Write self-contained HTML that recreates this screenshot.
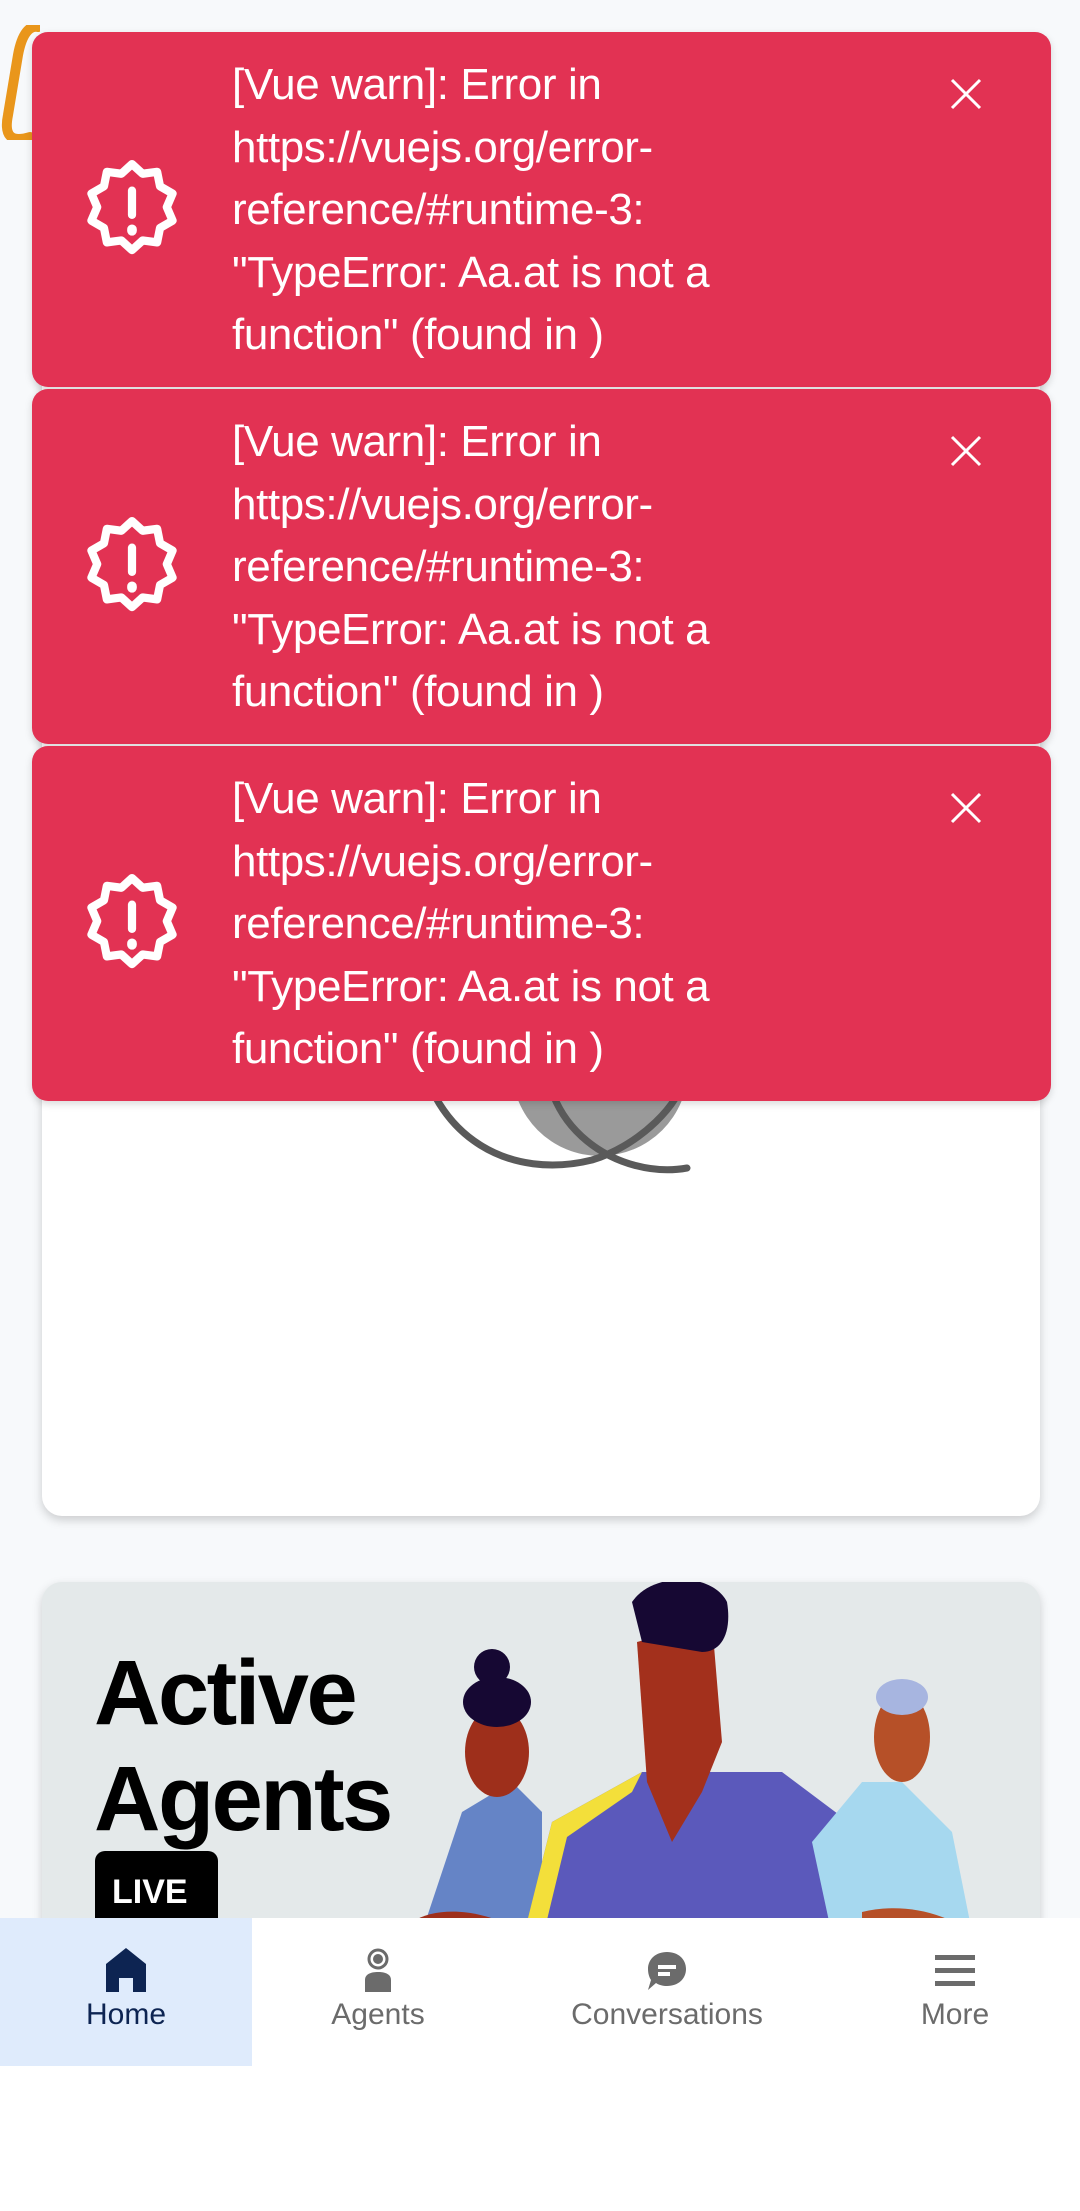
<!DOCTYPE html>
<html><head><meta charset="utf-8"><style>
*{box-sizing:border-box;margin:0;padding:0}
body{width:1080px;height:2211px;background:#f7f9fb;position:relative;overflow:hidden;font-family:"Liberation Sans",sans-serif}
.card{position:absolute;left:42px;width:998px;background:#fff;border-radius:20px;box-shadow:0 4px 10px rgba(0,0,0,.18)}
.toast{position:absolute;left:32px;width:1019px;height:355px;background:#e23253;border-radius:16px;color:#fff;box-shadow:0 3px 8px rgba(0,0,0,.15)}
.toast .t{position:absolute;left:200px;top:22px;font-size:44px;line-height:62.5px;letter-spacing:-0.4px;white-space:nowrap}
.toast .ic{position:absolute;left:72px;top:150px}
.toast .x{position:absolute;left:917px;top:45px}
.nav{position:absolute;top:1918px;left:0;width:1080px;height:148px;background:#fff}
.tab{position:absolute;top:0;height:148px;text-align:center;font-size:30px;color:#6b6b6b}
.tab span{position:absolute;left:0;right:0;top:80px}
</style></head><body>
<div style="position:absolute;left:0;top:25px;width:40px;height:115px;">
<svg width="40" height="115"><path d="M38 2 C30 0 22 8 18 30 L8 90 C4 110 10 118 30 112" fill="none" stroke="#e9961b" stroke-width="10" stroke-linecap="round"/></svg></div>
<div class="card" style="top:300px;height:1216px">
<svg style="position:absolute;left:300px;top:400px" width="420" height="480">
<circle cx="258" cy="368" r="88" fill="#9a9a9a"/>
<path d="M280 300 l20 10 l-5 40 l-25 20z" fill="#cfcfcf"/>
<path d="M75 340 C90 440 170 480 250 460 C300 445 340 400 340 380" fill="none" stroke="#5a5a5a" stroke-width="7" stroke-linecap="round"/>
<path d="M205 330 C190 430 280 480 345 468" fill="none" stroke="#5a5a5a" stroke-width="7" stroke-linecap="round"/>
</svg>
</div>
<div class="card" style="top:1582px;height:400px;background:#e4e9ea;overflow:hidden">
<div style="position:absolute;left:52px;top:58px;font-size:92px;font-weight:bold;line-height:106px;color:#000;letter-spacing:-2.5px">Active<br>Agents</div>
<div style="position:absolute;left:53px;top:269px;width:123px;height:80px;background:#000;border-radius:10px;color:#fff;font-weight:bold;font-size:34px;padding:22px 0 0 17px">LIVE</div>
<svg style="position:absolute;left:340px;top:0" width="660" height="400">
<path d="M40 350 L80 230 L130 200 L160 230 L160 400 L30 400z" fill="#6584c6"/>
<ellipse cx="115" cy="170" rx="32" ry="45" fill="#9e2f1b"/>
<ellipse cx="115" cy="120" rx="34" ry="25" fill="#160833"/>
<circle cx="110" cy="85" r="18" fill="#160833"/>
<path d="M130 400 L170 240 L260 190 L400 190 L480 250 L520 400z" fill="#5b59bb"/>
<path d="M170 240 L260 190 L250 210 L185 255 L150 400 L130 400z" fill="#f3df3a"/>
<path d="M255 60 L330 40 L340 160 L320 210 L290 260 L265 200z" fill="#a3301c"/>
<path d="M250 20 C270 -10 330 -10 345 20 C350 50 340 70 320 70 L260 60z" fill="#160833"/>
<path d="M430 260 L480 200 L520 200 L570 250 L600 400 L460 400z" fill="#a6d8ef"/>
<ellipse cx="520" cy="155" rx="28" ry="45" fill="#b65028"/>
<ellipse cx="520" cy="115" rx="26" ry="18" fill="#a7b5e0"/>
<path d="M30 340 C60 320 120 330 150 360 L150 400 L30 400z" fill="#9e2f1b"/>
<path d="M480 330 C520 320 570 330 600 360 L600 400 L480 400z" fill="#b65028"/>
</svg>
</div>
<div class="toast" style="top:32px"><div class="ic"><svg width="116" height="116" viewBox="0 0 24 24" fill="none" stroke="#fff" stroke-width="1.7" stroke-linecap="round" style="margin:-30px 0 0 -30px"><path d="M12 2.5l2.2 2 3-.4.6 3 2.6 1.5-1.2 2.8 1.2 2.8-2.6 1.5-.6 3-3-.4-2.2 2-2.2-2-3 .4-.6-3-2.6-1.5 1.2-2.8-1.2-2.8 2.6-1.5.6-3 3 .4z" stroke-linejoin="round"/><path d="M12 8v5"/><path d="M12 16v.3" stroke-width="2"/></svg></div><div class="t">[Vue warn]: Error in<br>https://vuejs.org/error-<br>reference/#runtime-3:<br>"TypeError: Aa.at is not a<br>function" (found in )</div><div class="x"><svg width="34" height="34"><path d="M3 3L31 31M31 3L3 31" stroke="#fff" stroke-width="3"/></svg></div></div>
<div class="toast" style="top:389px"><div class="ic"><svg width="116" height="116" viewBox="0 0 24 24" fill="none" stroke="#fff" stroke-width="1.7" stroke-linecap="round" style="margin:-30px 0 0 -30px"><path d="M12 2.5l2.2 2 3-.4.6 3 2.6 1.5-1.2 2.8 1.2 2.8-2.6 1.5-.6 3-3-.4-2.2 2-2.2-2-3 .4-.6-3-2.6-1.5 1.2-2.8-1.2-2.8 2.6-1.5.6-3 3 .4z" stroke-linejoin="round"/><path d="M12 8v5"/><path d="M12 16v.3" stroke-width="2"/></svg></div><div class="t">[Vue warn]: Error in<br>https://vuejs.org/error-<br>reference/#runtime-3:<br>"TypeError: Aa.at is not a<br>function" (found in )</div><div class="x"><svg width="34" height="34"><path d="M3 3L31 31M31 3L3 31" stroke="#fff" stroke-width="3"/></svg></div></div>
<div class="toast" style="top:746px"><div class="ic"><svg width="116" height="116" viewBox="0 0 24 24" fill="none" stroke="#fff" stroke-width="1.7" stroke-linecap="round" style="margin:-30px 0 0 -30px"><path d="M12 2.5l2.2 2 3-.4.6 3 2.6 1.5-1.2 2.8 1.2 2.8-2.6 1.5-.6 3-3-.4-2.2 2-2.2-2-3 .4-.6-3-2.6-1.5 1.2-2.8-1.2-2.8 2.6-1.5.6-3 3 .4z" stroke-linejoin="round"/><path d="M12 8v5"/><path d="M12 16v.3" stroke-width="2"/></svg></div><div class="t">[Vue warn]: Error in<br>https://vuejs.org/error-<br>reference/#runtime-3:<br>"TypeError: Aa.at is not a<br>function" (found in )</div><div class="x"><svg width="34" height="34"><path d="M3 3L31 31M31 3L3 31" stroke="#fff" stroke-width="3"/></svg></div></div>
<div style="position:absolute;top:2066px;left:0;width:1080px;height:145px;background:#fff"></div>
<div class="nav">
<div class="tab" style="left:0;width:252px;background:#dfebfc;color:#0d2452"><svg style="position:absolute;left:106px;top:30px" width="40" height="44"><path d="M0 16L20 0L40 16V44H27V30H13V44H0z" fill="#0d2452"/></svg><span>Home</span></div>
<div class="tab" style="left:252px;width:252px"><svg style="position:absolute;left:111px;top:30px" width="30" height="44"><circle cx="15" cy="11" r="9" fill="none" stroke="#6b6b6b" stroke-width="3"/><circle cx="15" cy="11" r="5" fill="#6b6b6b"/><path d="M2 44V32C2 26 8 24 15 24S28 26 28 32V44z" fill="#6b6b6b"/></svg><span>Agents</span></div>
<div class="tab" style="left:504px;width:326px"><svg style="position:absolute;left:143px;top:33px" width="40" height="40"><path d="M20 1C31 1 39 8 39 18S31 35 20 35C16 35 12 34 9 32L1 39L4 29C2 26 1 22 1 18C1 8 9 1 20 1z" fill="#6b6b6b"/><rect x="11" y="14" width="18" height="4" fill="#fff"/><rect x="11" y="21" width="12" height="4" fill="#fff"/></svg><span>Conversations</span></div>
<div class="tab" style="left:830px;width:250px"><svg style="position:absolute;left:105px;top:37px" width="40" height="32"><rect y="0" width="40" height="5" fill="#6b6b6b"/><rect y="13" width="40" height="5" fill="#6b6b6b"/><rect y="26" width="40" height="5" fill="#6b6b6b"/></svg><span>More</span></div>
</div>
</body></html>
